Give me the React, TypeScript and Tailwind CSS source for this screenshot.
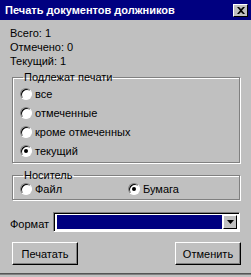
import React from "react";

const font = { fontFamily: '"Liberation Sans", Arial, sans-serif' };

const Radio = ({ label, checked }: { label: string; checked?: boolean }) => (
  <label className="flex items-center gap-[3px] h-full">
    <span className="w-[12px] h-[12px] rounded-full bg-white border border-t-[#808080] border-l-[#808080] border-r-white border-b-white shadow-[inset_1px_1px_0_#000] flex items-center justify-center">
      {checked && <span className="w-[4px] h-[4px] rounded-full bg-black" />}
    </span>
    <span>{label}</span>
  </label>
);

const Button = ({ children }: { children: React.ReactNode }) => (
  <button className="w-[66px] h-[23px] bg-[#c0c0c0] border border-t-white border-l-white border-r-black border-b-black shadow-[inset_-1px_-1px_0_#808080] text-[11px] text-black">
    {children}
  </button>
);

export default function App() {
  return (
    <div className="w-[251px] h-[277px] bg-[#c0c0c0] overflow-hidden" style={font}>
      <div className="h-[274px] text-[11px] leading-[14px] text-black flex flex-col border-b border-b-[#555] shadow-[0_1px_0_#808080]">
        <div className="h-[20px] bg-[#000080] flex items-center justify-between pl-[5px] pr-[3px] shrink-0">
          <span className="text-white font-bold text-[11px]">Печать документов должников</span>
          <button className="w-[15px] h-[13px] bg-[#c0c0c0] border border-t-white border-l-white border-r-black border-b-black flex items-center justify-center">
            <svg width="8" height="7" viewBox="0 0 8 7">
              <path d="M0 0h2l2 2 2-2h2L5 3.5 8 7H6L4 5 2 7H0l3-3.5z" fill="#000" />
            </svg>
          </button>
        </div>

        <div className="px-[10px] pt-[6px] flex flex-col">
          <div>Всего: 1</div>
          <div>Отмечено: 0</div>
          <div>Текущий: 1</div>

          <fieldset className="mt-[2px] ml-[2px] w-[228px] border border-[#808080] shadow-[inset_1px_1px_0_#fff,1px_1px_0_#fff] pl-[7px] pb-[2px] m-0">
            <legend className="ml-[3px] px-[1px]">Подлежат печати</legend>
            <div className="h-[19px]"><Radio label="все" /></div>
            <div className="h-[19px]"><Radio label="отмеченные" /></div>
            <div className="h-[19px]"><Radio label="кроме отмеченных" /></div>
            <div className="h-[19px]"><Radio label="текущий" checked /></div>
          </fieldset>

          <fieldset className="mt-[5px] ml-[2px] w-[228px] border border-[#808080] shadow-[inset_1px_1px_0_#fff,1px_1px_0_#fff] pl-[7px] pb-[3px] m-0">
            <legend className="ml-[3px] px-[1px]">Носитель</legend>
            <div className="h-[14px] flex">
              <div className="w-[108px]"><Radio label="Файл" /></div>
              <Radio label="Бумага" checked />
            </div>
          </fieldset>

          <div className="mt-[12px] flex items-center">
            <span className="w-[43px] mt-[3px]">Формат</span>
            <div className="w-[187px] h-[20px] bg-white border border-t-[#808080] border-l-[#808080] border-r-white border-b-white shadow-[inset_1px_1px_0_#000] flex p-[2px] pl-[3px]">
              <div className="flex-1 bg-[#000080]" />
              <div className="w-[14px] ml-[1px] bg-[#c0c0c0] border border-t-white border-l-white border-r-black border-b-black flex items-center justify-center">
                <svg width="7" height="4" viewBox="0 0 7 4">
                  <path d="M0 0h7L3.5 4z" fill="#000" />
                </svg>
              </div>
            </div>
          </div>

          <div className="mt-[10px] ml-[2px] w-[229px] flex justify-between">
            <Button>Печатать</Button>
            <Button>Отменить</Button>
          </div>
        </div>
      </div>
    </div>
  );
}
